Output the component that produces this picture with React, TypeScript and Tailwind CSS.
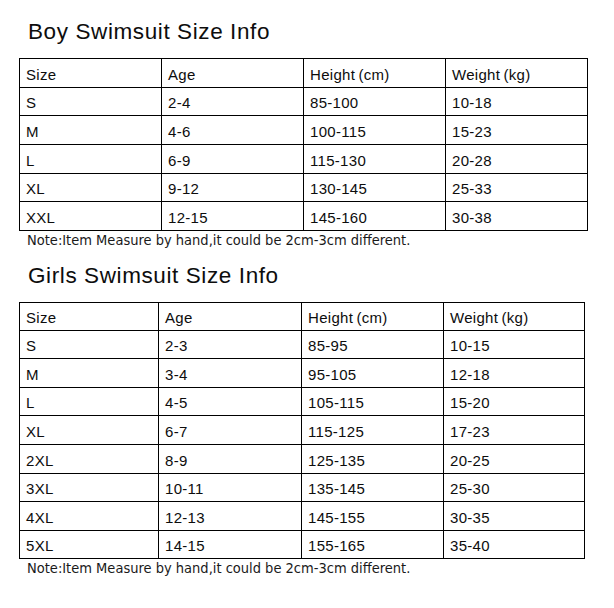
import React from "react";

type Row = string[];

const boyRows: Row[] = [
  ["Size", "Age", "Height\u2009(cm)", "Weight\u2009(kg)"],
  ["S", "2-4", "85-100", "10-18"],
  ["M", "4-6", "100-115", "15-23"],
  ["L", "6-9", "115-130", "20-28"],
  ["XL", "9-12", "130-145", "25-33"],
  ["XXL", "12-15", "145-160", "30-38"],
];
const boyHeights = [29, 28, 29, 29, 28, 29];

const girlRows: Row[] = [
  ["Size", "Age", "Height\u2009(cm)", "Weight\u2009(kg)"],
  ["S", "2-3", "85-95", "10-15"],
  ["M", "3-4", "95-105", "12-18"],
  ["L", "4-5", "105-115", "15-20"],
  ["XL", "6-7", "115-125", "17-23"],
  ["2XL", "8-9", "125-135", "20-25"],
  ["3XL", "10-11", "135-145", "25-30"],
  ["4XL", "12-13", "145-155", "30-35"],
  ["5XL", "14-15", "155-165", "35-40"],
];
const girlHeights = [28, 28, 29, 28, 29, 29, 28, 29, 28];

function SizeTable({
  rows,
  heights,
  widths,
}: {
  rows: Row[];
  heights: number[];
  widths: number[];
}) {
  return (
    <div className="flex flex-col border-l border-t border-black w-fit">
      {rows.map((r, i) => (
        <div key={i} className="flex" style={{ height: heights[i] }}>
          {r.map((c, j) => (
            <div
              key={j}
              className="flex items-center border-r border-b border-black pl-[6px] pt-[2px] text-[15px] leading-[17px] tracking-[0.3px] text-[#0d0d0d]"
              style={{ width: widths[j] }}
            >
              {c}
            </div>
          ))}
        </div>
      ))}
    </div>
  );
}

export default function App() {
  return (
    <div
      className="w-[614px] h-[608px] bg-white pl-[19px] overflow-hidden"
      style={{ fontFamily: '"Liberation Sans", Arial, sans-serif' }}
    >
      <h1 className="mt-[18px] pl-[9px] text-[22.5px] leading-[28px] tracking-[0.6px] text-[#0d0d0d] font-normal">
        Boy Swimsuit Size Info
      </h1>
      <div className="mt-[12px]">
        <SizeTable rows={boyRows} heights={boyHeights} widths={[142, 142, 142, 142]} />
      </div>
      <p
        className="pl-[8px] text-[14.5px] leading-[19px] text-[#1a1a1a]"
        style={{ fontFamily: '"DejaVu Sans Condensed", "DejaVu Sans", sans-serif' }}
      >
        Note:Item Measure by hand,it could be 2cm-3cm different.
      </p>
      <h1 className="mt-[12px] pl-[9px] text-[22.5px] leading-[28px] tracking-[0.6px] text-[#0d0d0d] font-normal">
        Girls Swimsuit Size Info
      </h1>
      <div className="mt-[12px]">
        <SizeTable rows={girlRows} heights={girlHeights} widths={[139, 143, 142, 141]} />
      </div>
      <p
        className="pl-[8px] text-[14.5px] leading-[19px] text-[#1a1a1a]"
        style={{ fontFamily: '"DejaVu Sans Condensed", "DejaVu Sans", sans-serif' }}
      >
        Note:Item Measure by hand,it could be 2cm-3cm different.
      </p>
    </div>
  );
}
